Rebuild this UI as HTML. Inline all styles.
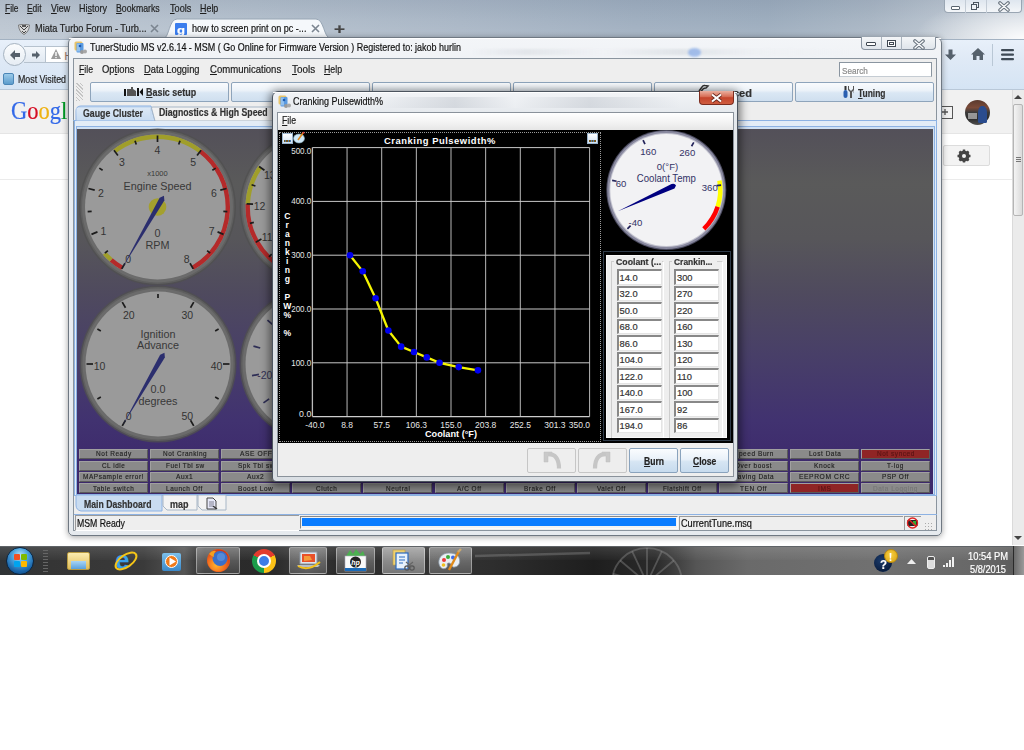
<!DOCTYPE html>
<html><head><meta charset="utf-8"><style>
*{margin:0;padding:0;box-sizing:border-box}
html,body{width:1024px;height:750px;overflow:hidden;background:#fff;font-family:"Liberation Sans",sans-serif}
body{position:relative}
.a{position:absolute}
.t{position:absolute;white-space:nowrap;line-height:1;-webkit-text-stroke:0.2px currentColor}
u{text-decoration:underline;text-underline-offset:1px;text-decoration-thickness:1px}
</style></head><body>
<div class="a" style="left:0px;top:0px;width:1024px;height:40px;background:linear-gradient(90deg,#bcc6d1 0%,#b3bfcc 25%,#aab7c6 45%,#a0afc0 62%,#9dadbe 75%,#a9b6c4 85%,#bcc6d1 93%,#c8d1db 100%)"></div>
<div class="a" style="left:0px;top:0px;width:1024px;height:40px;background:linear-gradient(180deg,rgba(60,80,110,0.10) 0%,rgba(255,255,255,0.0) 50%,rgba(255,255,255,0.10) 100%)"></div>
<div class="a" style="left:850px;top:0px;width:174px;height:40px;background:radial-gradient(ellipse 110px 45px at 100% 100%,rgba(255,255,255,.95) 0%,rgba(255,255,255,.5) 45%,rgba(255,255,255,0) 100%)"></div>
<div class="t" style="left:4.50px;top:2.89px;font-size:11px;color:#1e1e1e;transform:scaleX(0.7616);transform-origin:0 0;"><u>F</u>ile</div>
<div class="t" style="left:27.00px;top:2.89px;font-size:11px;color:#1e1e1e;transform:scaleX(0.7650);transform-origin:0 0;"><u>E</u>dit</div>
<div class="t" style="left:50.50px;top:2.89px;font-size:11px;color:#1e1e1e;transform:scaleX(0.8078);transform-origin:0 0;"><u>V</u>iew</div>
<div class="t" style="left:78.60px;top:2.89px;font-size:11px;color:#1e1e1e;transform:scaleX(0.8210);transform-origin:0 0;">Hi<u>s</u>tory</div>
<div class="t" style="left:116.40px;top:2.89px;font-size:11px;color:#1e1e1e;transform:scaleX(0.7925);transform-origin:0 0;"><u>B</u>ookmarks</div>
<div class="t" style="left:169.60px;top:2.89px;font-size:11px;color:#1e1e1e;transform:scaleX(0.8333);transform-origin:0 0;"><u>T</u>ools</div>
<div class="t" style="left:200.00px;top:2.89px;font-size:11px;color:#1e1e1e;transform:scaleX(0.8089);transform-origin:0 0;"><u>H</u>elp</div>
<div class="a" style="left:944px;top:-1px;width:78px;height:14px;background:linear-gradient(180deg,#dde5ee,#f3f6f9);border:1px solid #9aa6b3;border-top:none;border-radius:0 0 4px 4px"></div>
<div class="a" style="left:965px;top:0px;width:1px;height:13px;background:#c3ccd6"></div>
<div class="a" style="left:986px;top:0px;width:1px;height:13px;background:#c3ccd6"></div>
<div class="a" style="left:951px;top:6px;width:9px;height:4px;border:1.2px solid #5a6570;background:#fff;border-radius:1px"></div>
<div class="a" style="left:973px;top:2px;width:6px;height:6px;border:1px solid #4a5560"></div>
<div class="a" style="left:971px;top:4px;width:6px;height:6px;border:1px solid #4a5560;background:#eef2f6"></div>
<svg class="a" style="left:998px;top:1px" width="12" height="11"><path d="M2 2 L10 9 M10 2 L2 9" stroke="#6a7580" stroke-width="3.6" stroke-linecap="round"/><path d="M2 2 L10 9 M10 2 L2 9" stroke="#fbfcfd" stroke-width="1.4" stroke-linecap="round"/></svg>
<svg class="a" style="left:18px;top:24px" width="12" height="11"><path d="M0.5 1 Q6 -0.5 11.5 1 Q11 8 6 10.5 Q1 8 0.5 1Z" fill="#d8d8d8" stroke="#666" stroke-width=".8"/><path d="M2 2 L6 6 L10 2 M4 7 L6 9 L8 7" stroke="#444" stroke-width="1" fill="none"/><rect x="4" y="1" width="4" height="2" fill="#555"/></svg>
<div class="t" style="left:34.50px;top:23.29px;font-size:11px;color:#222;transform:scaleX(0.8328);transform-origin:0 0;">Miata Turbo Forum - Turb...</div>
<svg class="a" style="left:150px;top:24px" width="9" height="9"><path d="M1 1 L8 8 M8 1 L1 8" stroke="#7b8590" stroke-width="1.6"/></svg>
<svg class="a" style="left:164px;top:18px" width="166" height="20"><path d="M0 20 C5 20 5 1 13 1 L152 1 C160 1 160 20 166 20 Z" fill="#f5f8fb" stroke="#98a6b5" stroke-width="1"/></svg>
<div class="a" style="left:175px;top:23px;width:12px;height:12px;background:#3b7ded;border-radius:1px"></div>
<div class="t" style="left:177.00px;top:24.69px;font-size:11px;font-weight:bold;color:#fff;transform:scaleX(1.1906);transform-origin:0 0;">g</div>
<div class="t" style="left:191.60px;top:23.29px;font-size:11px;color:#111;transform:scaleX(0.8243);transform-origin:0 0;">how to screen print on pc -...</div>
<svg class="a" style="left:311px;top:24px" width="9" height="9"><path d="M1 1 L8 8 M8 1 L1 8" stroke="#7b8590" stroke-width="1.6"/></svg>
<div class="t" style="left:334.00px;top:21.30px;font-size:15px;font-weight:bold;color:#444;transform:scaleX(1.2557);transform-origin:0 0;">+</div>
<div class="a" style="left:0px;top:39px;width:1024px;height:51px;background:linear-gradient(180deg,#e8f0fa 0%,#e0eaf6 35%,#d5e4f4 100%);border-top:1px solid #a3b2c2;border-bottom:1px solid #b9c8d8"></div>
<div class="a" style="left:24px;top:46px;width:22px;height:17px;background:linear-gradient(180deg,#f3f7fb,#e1e9f2);border:1px solid #b6c2ce;border-left:none"></div>
<div class="a" style="left:45px;top:46px;width:30px;height:17px;background:#fff;border:1px solid #b6c2ce"></div>
<div class="a" style="left:3px;top:43px;width:23px;height:23px;border-radius:50%;background:linear-gradient(180deg,#fbfcfd,#e6edf4);border:1px solid #a6b3c0"></div>
<svg class="a" style="left:9px;top:49px" width="12" height="12"><path d="M1 6 L6 1 L6 4 L11 4 L11 8 L6 8 L6 11 Z" fill="#56616c"/></svg>
<svg class="a" style="left:31px;top:50px" width="10" height="10"><path d="M9 5 L5 1 L5 3.5 L1 3.5 L1 6.5 L5 6.5 L5 9 Z" fill="#56616c"/></svg>
<svg class="a" style="left:50px;top:48px" width="12" height="12"><path d="M6 1 L11 11 L1 11 Z" fill="#9a9a9a"/><rect x="5.3" y="4" width="1.4" height="4" fill="#fff"/><rect x="5.3" y="9" width="1.4" height="1.2" fill="#fff"/></svg>
<div class="t" style="left:64.50px;top:51.53px;font-size:10px;color:#9a7a6a;transform:scaleX(1.0000);transform-origin:0 0;">H</div>
<div class="a" style="left:3px;top:73px;width:11px;height:12px;background:linear-gradient(180deg,#9ccbea,#5c9ccc);border-radius:2px;border:1px solid #4b86b6"></div>
<div class="t" style="left:18.00px;top:74.09px;font-size:11px;color:#222;transform:scaleX(0.8039);transform-origin:0 0;">Most Visited</div>
<svg class="a" style="left:945px;top:49px" width="12" height="12"><path d="M3.5 0.5 L7.5 0.5 L7.5 5.5 L11 5.5 L5.5 11 L0 5.5 L3.5 5.5 Z" fill="#56616c"/></svg>
<svg class="a" style="left:970px;top:47px" width="16" height="14"><path d="M8 1 L15 7.5 L13 7.5 L13 13 L9.5 13 L9.5 9 L6.5 9 L6.5 13 L3 13 L3 7.5 L1 7.5 Z" fill="#56616c"/></svg>
<div class="a" style="left:992px;top:44px;width:1px;height:22px;background:#b9c7d5"></div>
<svg class="a" style="left:1001px;top:49px" width="14" height="12"><rect x="0" y="0" width="13" height="2.2" rx="1" fill="#3e4a56"/><rect x="0" y="4.5" width="13" height="2.2" rx="1" fill="#3e4a56"/><rect x="0" y="9" width="13" height="2.2" rx="1" fill="#3e4a56"/></svg>
<div class="a" style="left:0px;top:90px;width:1012px;height:455px;background:#fff"></div>
<div class="a" style="left:0px;top:90px;width:1012px;height:44px;background:#f1f1f1;border-bottom:1px solid #e5e5e5"></div>
<div class="a" style="left:0px;top:179px;width:1012px;height:1px;background:#ebebeb"></div>
<div class="t" style="left:11px;top:97.6px;font-family:'Liberation Serif',serif;font-size:25px;transform:scaleX(0.9);transform-origin:0 0"><span style="color:#3369e8">G</span><span style="color:#d50f25">o</span><span style="color:#eeb211">o</span><span style="color:#3369e8">g</span><span style="color:#009925">l</span></div>
<div class="a" style="left:965px;top:100px;width:25px;height:25px;border-radius:50%;overflow:hidden;background:linear-gradient(180deg,#5a3a2e 0%,#7a4a38 30%,#3a3a3a 50%,#2c2c2c 75%,#505050 100%)"></div>
<div class="a" style="left:978px;top:106px;width:9px;height:17px;border-radius:40% 40% 10% 10%;background:#2a4c8e"></div>
<div class="a" style="left:968px;top:113px;width:9px;height:6px;background:#d8d8d8;opacity:.6"></div>
<div class="a" style="left:943px;top:145px;width:47px;height:21px;background:#f3f3f3;border:1px solid #dcdcdc;border-radius:2px"></div>
<svg class="a" style="left:957px;top:149px" width="14" height="14"><circle cx="7" cy="7" r="4.2" fill="none" stroke="#444" stroke-width="2.6"/><g stroke="#444" stroke-width="2.4"><line x1="7" y1="0.5" x2="7" y2="13.5"/><line x1="0.5" y1="7" x2="13.5" y2="7"/><line x1="2.4" y1="2.4" x2="11.6" y2="11.6"/><line x1="11.6" y1="2.4" x2="2.4" y2="11.6"/></g><circle cx="7" cy="7" r="2" fill="#f3f3f3"/></svg>
<div class="a" style="left:942px;top:106px;width:11px;height:13px;border:1px solid #555;border-left:none;background:transparent"></div>
<svg class="a" style="left:942px;top:108px" width="8" height="8"><path d="M0 4h6M3 1v6" stroke="#555" stroke-width="1.3"/></svg>
<div class="a" style="left:1012px;top:90px;width:12px;height:455px;background:#ebebeb;border-left:1px solid #dadada"></div>
<div class="a" style="left:1013px;top:104px;width:10px;height:112px;background:linear-gradient(90deg,#f4f4f4,#dadada);border:1px solid #b5b5b5;border-radius:2px"></div>
<div class="a" style="left:1016px;top:157px;width:5px;height:1px;background:#777;box-shadow:0 2px 0 #777,0 4px 0 #777"></div>
<svg class="a" style="left:1014px;top:94px" width="8" height="6"><path d="M0 5 L4 1 L8 5 Z" fill="#444"/></svg>
<svg class="a" style="left:1014px;top:535px" width="8" height="6"><path d="M0 1 L4 5 L8 1 Z" fill="#444"/></svg>
<div class="a" style="left:0px;top:546px;width:1024px;height:29px;background:linear-gradient(90deg,#2f3336 0%,#353535 5%,#3a3a3a 14%,#555 18%,#2a2a2a 20%,#2b2b2b 27%,#3e3e3e 30%,#2a2a2a 33%,#333 42%,#2e2e2e 48%,#1e1e1e 58%,#2a2a2a 64%,#555 68%,#6a6a6a 73%,#707070 85%,#686868 95%,#5a5a5a 100%);border-top:1px solid #5f6367"></div>
<div class="a" style="left:0px;top:547px;width:1024px;height:13px;background:linear-gradient(180deg,rgba(255,255,255,.12),rgba(255,255,255,0.02))"></div>
<svg class="a" style="left:470px;top:546px" width="230" height="29"><path d="M5 10 L120 7" stroke="rgba(170,170,170,.3)" stroke-width="2.5"/><g stroke="rgba(160,160,160,.35)" stroke-width="1.8" fill="none"><circle cx="177" cy="37" r="35"/><path d="M183.1 31.9 L203.8 14.5 M180.4 29.7 L191.8 5.3 M177.0 29.0 L177.0 2.0 M173.6 29.7 L162.2 5.3 M170.9 31.9 L150.2 14.5 M169.3 34.9 L143.2 27.9"/></g></svg>
<div class="a" style="left:6px;top:547px;width:28px;height:28px;border-radius:50%;background:radial-gradient(circle at 50% 30%,#bfe6fb 0%,#4aa3dd 35%,#1a64a8 70%,#0e3a68 100%);border:1px solid #0a2440"></div>
<div class="a" style="left:14px;top:554px;width:6px;height:6px;background:#f25022;border-radius:1px"></div>
<div class="a" style="left:21px;top:554px;width:6px;height:6px;background:#7fba00;border-radius:1px"></div>
<div class="a" style="left:14px;top:561px;width:6px;height:6px;background:#00a4ef;border-radius:1px"></div>
<div class="a" style="left:21px;top:561px;width:6px;height:6px;background:#ffb900;border-radius:1px"></div>
<div class="a" style="left:43px;top:550px;width:5px;height:22px;background:repeating-linear-gradient(180deg,#666 0 1px,transparent 1px 3px)"></div>
<div class="a" style="left:196px;top:547px;width:44px;height:27px;border:1px solid rgba(255,255,255,.38);border-radius:2px;background:linear-gradient(180deg,rgba(255,255,255,0.32),rgba(255,255,255,0.12))"></div>
<div class="a" style="left:289px;top:547px;width:38px;height:27px;border:1px solid rgba(255,255,255,.38);border-radius:2px;background:linear-gradient(180deg,rgba(255,255,255,0.35),rgba(255,255,255,0.15))"></div>
<div class="a" style="left:336px;top:547px;width:39px;height:27px;border:1px solid rgba(255,255,255,.38);border-radius:2px;background:linear-gradient(180deg,rgba(255,255,255,0.35),rgba(255,255,255,0.15))"></div>
<div class="a" style="left:382px;top:547px;width:43px;height:27px;border:1px solid rgba(255,255,255,.38);border-radius:2px;background:linear-gradient(180deg,rgba(255,255,255,0.55),rgba(255,255,255,0.35))"></div>
<div class="a" style="left:429px;top:547px;width:43px;height:27px;border:1px solid rgba(255,255,255,.38);border-radius:2px;background:linear-gradient(180deg,rgba(255,255,255,0.38),rgba(255,255,255,0.18000000000000002))"></div>
<div class="a" style="left:67px;top:552px;width:23px;height:18px;background:linear-gradient(180deg,#fbecb0,#e0bd5a);border-radius:2px;border:1px solid #b89a40"></div>
<div class="a" style="left:71px;top:561px;width:15px;height:8px;background:linear-gradient(180deg,#a8d4f5,#5aa0dc)"></div>
<svg class="a" style="left:113px;top:548px" width="26" height="26"><text x="2" y="21" font-family="Liberation Sans" font-size="26" font-weight="bold" fill="#3aa0ea">e</text><ellipse cx="13" cy="13" rx="12" ry="6" fill="none" stroke="#f5c518" stroke-width="2" transform="rotate(-35 13 13)"/></svg>
<div class="a" style="left:162px;top:553px;width:19px;height:18px;background:linear-gradient(180deg,#7cc0ec,#3a88c8);border-radius:2px"></div>
<div class="a" style="left:165px;top:555px;width:13px;height:13px;border-radius:50%;background:#f07a1a;border:1px solid #fff"></div>
<svg class="a" style="left:168px;top:557px" width="9" height="9"><path d="M1.5 0.5 L8 4.5 L1.5 8.5 Z" fill="#fff"/></svg>
<svg class="a" style="left:206px;top:548px" width="25" height="25"><circle cx="12.5" cy="12.5" r="11.5" fill="#e8591c"/><circle cx="12.5" cy="12.5" r="11" fill="url(#fxg)"/><defs><radialGradient id="fxg" cx="0.4" cy="0.7" r="0.7"><stop offset="0" stop-color="#ffb52e"/><stop offset="0.6" stop-color="#f06a1e"/><stop offset="1" stop-color="#c9381a"/></radialGradient></defs><circle cx="14" cy="10.5" r="7.5" fill="#3a6fc9"/><circle cx="15" cy="9" r="4" fill="#5f95e0" opacity=".7"/><path d="M3 6 Q6 2 10 3 Q7 6 8 9 Q5 8 3 6Z" fill="#f5a020"/></svg>
<div class="a" style="left:252px;top:549px;width:24px;height:24px;border-radius:50%;background:conic-gradient(from -60deg,#e33b2e 0deg 120deg,#fbc116 120deg 240deg,#1a9c4a 240deg 360deg)"></div>
<div class="a" style="left:257px;top:554px;width:14px;height:14px;border-radius:50%;background:#3c7ce8;border:2.5px solid #fff"></div>
<svg class="a" style="left:295px;top:550px" width="28" height="22"><path d="M5 2 L22 2 L22 14 L5 14 Z" fill="#dfe3ea" stroke="#8a94a0" stroke-width="1"/><path d="M7 4 L20 4 L20 12 L7 12 Z" fill="#e8502a"/><path d="M9 6 L15 6 L17 10 L9 11 Z" fill="#f59a3a"/><path d="M2 15 L25 15 L23 17 L4 17 Z" fill="#b8bec8"/><path d="M3 16 Q13 22 25 12" fill="none" stroke="#f2c01a" stroke-width="2"/></svg>
<svg class="a" style="left:343px;top:548px" width="25" height="25"><path d="M3 8 L7 2 L10 6 L13 1 L17 6 L20 3 L22 8 Z" fill="#4cb050"/><rect x="2" y="8" width="21" height="15" fill="#fafafa" stroke="#aab" stroke-width=".6"/><rect x="2" y="20" width="21" height="3" fill="#1a6ab8"/><circle cx="12.5" cy="14" r="5.5" fill="#222"/><text x="12.5" y="16.5" font-family="Liberation Sans" font-size="7" font-weight="bold" font-style="italic" fill="#fff" text-anchor="middle">hp</text></svg>
<svg class="a" style="left:391px;top:549px" width="25" height="24"><rect x="2" y="1" width="12" height="15" fill="#f0d070" stroke="#b89a40" stroke-width=".6"/><rect x="5" y="4" width="12" height="16" fill="#e8f2fc" stroke="#2a6ac0" stroke-width="1.2"/><path d="M8 8h6M8 11h6M8 14h4" stroke="#2a6ac0" stroke-width="1"/><circle cx="16" cy="19" r="2.2" fill="none" stroke="#555" stroke-width="1.2"/><circle cx="21" cy="19" r="2.2" fill="none" stroke="#555" stroke-width="1.2"/><path d="M15 13 L21 18 M22 13 L16 18" stroke="#666" stroke-width="1.2"/></svg>
<svg class="a" style="left:437px;top:548px" width="26" height="25"><path d="M12 5 C4 5 1 11 2 16 C3 21 8 22 10 19 C11 17 9 15 12 15 C15 15 14 20 18 19 C23 18 24 12 21 8 C19 6 16 5 12 5Z" fill="#e9eef3" stroke="#8a99a8" stroke-width=".8"/><circle cx="7" cy="12" r="2" fill="#e83a3a"/><circle cx="11" cy="9" r="2" fill="#3aaa3a"/><circle cx="16" cy="9.5" r="2" fill="#3a6ae8"/><circle cx="6.5" cy="17" r="1.8" fill="#f0c020"/><path d="M12 22 L22 3" stroke="#e08a1a" stroke-width="2.4"/><path d="M21 4 L24 1" stroke="#c9a870" stroke-width="2.4"/></svg>
<div class="a" style="left:874px;top:554px;width:18px;height:18px;border-radius:50%;background:radial-gradient(circle at 40% 35%,#1a3a6a,#0a1e40 70%,#2a70c0 100%)"></div>
<div class="t" style="left:880.00px;top:558.00px;font-size:13px;font-weight:bold;color:#fff;transform:scaleX(0.8815);transform-origin:0 0;">?</div>
<div class="a" style="left:884px;top:549px;width:14px;height:14px;border-radius:50%;background:radial-gradient(circle at 45% 40%,#f8d040,#d8a010);border:1px solid #b88a10"></div>
<div class="t" style="left:889.00px;top:552.53px;font-size:10px;font-weight:bold;color:#fff;transform:scaleX(0.9008);transform-origin:0 0;">!</div>
<svg class="a" style="left:907px;top:559px" width="9" height="6"><path d="M0 5 L4.5 0 L9 5 Z" fill="#eee"/></svg>
<div class="a" style="left:927px;top:556px;width:8px;height:13px;border:1.5px solid #eee;border-radius:2px;background:linear-gradient(180deg,#555 25%,#ddd 25%)"></div>
<svg class="a" style="left:942px;top:555px" width="14" height="13"><path d="M1 12h2v-2H1zM4 12h2V8H4zM7 12h2V5H7zM10 12h2V2h-2z" fill="#f0f0f0"/></svg>
<div class="t" style="left:968.00px;top:552.03px;font-size:10px;color:#fff;transform:scaleX(0.9345);transform-origin:0 0;">10:54 PM</div>
<div class="t" style="left:970.00px;top:565.03px;font-size:10px;color:#fff;transform:scaleX(0.9248);transform-origin:0 0;">5/8/2015</div>
<div class="a" style="left:1013px;top:546px;width:11px;height:29px;background:linear-gradient(90deg,#6a6a6a,#9a9a9a);border-left:1px solid #2a2a2a"></div>
<div class="a" style="left:68px;top:37px;width:874px;height:499px;border-radius:6px 6px 5px 5px;box-shadow:0 1px 6px rgba(0,0,0,.38)"></div>
<div class="a" style="left:68px;top:37px;width:874px;height:499px;border-radius:6px 6px 5px 5px;background:linear-gradient(180deg,#f3f5f8 0%,#eceff3 10%,#e6eaee 100%);border:1px solid #6f7882"></div>
<div class="a" style="left:69px;top:38px;width:872px;height:1px;background:rgba(255,255,255,.9)"></div>
<div class="a" style="left:470px;top:49px;width:380px;height:6px;background:linear-gradient(90deg,rgba(255,255,255,0),rgba(195,200,208,.3) 15%,rgba(240,242,245,.2) 35%,rgba(185,192,200,.3) 55%,rgba(230,233,236,.2) 75%,rgba(255,255,255,0));filter:blur(1px)"></div>
<div class="a" style="left:688px;top:48px;width:13px;height:9px;border-radius:50%;background:rgba(80,135,230,.45);filter:blur(1px)"></div>
<svg class="a" style="left:74px;top:41px" width="14" height="14"><rect x="0.5" y="0.5" width="8" height="9" rx="1.5" fill="#e8c46a"/><rect x="2.5" y="2" width="7" height="9.5" rx="1" fill="#5a9ae0"/><rect x="3" y="2.5" width="3" height="8" fill="#a8d0f5" opacity=".7"/><circle cx="6" cy="5" r="1.3" fill="#1a5ab0"/><circle cx="8" cy="11" r="2" fill="#9a9a9a"/><circle cx="11" cy="10.5" r="2" fill="#a8a8a8"/></svg>
<div class="t" style="left:89.50px;top:41.76px;font-size:10.8px;color:#111;transform:scaleX(0.8306);transform-origin:0 0;">TunerStudio MS v2.6.14 - MSM ( Go Online for Firmware Version ) Registered to: jakob hurlin</div>
<div class="a" style="left:861px;top:37px;width:75px;height:13px;background:linear-gradient(180deg,#f4f6f8,#dfe5eb);border:1px solid #8893a0;border-top:none;border-radius:0 0 4px 4px"></div>
<div class="a" style="left:881px;top:37px;width:1px;height:13px;background:#a9b3bd"></div>
<div class="a" style="left:901px;top:37px;width:1px;height:13px;background:#a9b3bd"></div>
<div class="a" style="left:866px;top:42px;width:10px;height:4px;border:1px solid #3f4852;background:#fff;border-radius:1px"></div>
<div class="a" style="left:887px;top:40px;width:9px;height:7px;border:1px solid #3f4852;background:#fff"></div>
<div class="a" style="left:889px;top:42px;width:5px;height:3px;border:1px solid #3f4852"></div>
<svg class="a" style="left:913px;top:38.5px" width="12" height="11"><path d="M2 2 L10 9 M10 2 L2 9" stroke="#6a7580" stroke-width="3.6" stroke-linecap="round"/><path d="M2 2 L10 9 M10 2 L2 9" stroke="#fbfcfd" stroke-width="1.4" stroke-linecap="round"/></svg>
<div class="a" style="left:73px;top:58px;width:864px;height:473px;background:#eeeeee;border:1px solid #8a949e"></div>
<div class="t" style="left:78.60px;top:64.09px;font-size:11px;color:#1a1a1a;transform:scaleX(0.7898);transform-origin:0 0;"><u>F</u>ile</div>
<div class="t" style="left:102.00px;top:64.09px;font-size:11px;color:#1a1a1a;transform:scaleX(0.8573);transform-origin:0 0;">Op<u>t</u>ions</div>
<div class="t" style="left:144.20px;top:64.09px;font-size:11px;color:#1a1a1a;transform:scaleX(0.8481);transform-origin:0 0;"><u>D</u>ata Logging</div>
<div class="t" style="left:209.80px;top:64.09px;font-size:11px;color:#1a1a1a;transform:scaleX(0.8691);transform-origin:0 0;"><u>C</u>ommunications</div>
<div class="t" style="left:291.90px;top:64.09px;font-size:11px;color:#1a1a1a;transform:scaleX(0.8995);transform-origin:0 0;"><u>T</u>ools</div>
<div class="t" style="left:324.00px;top:64.09px;font-size:11px;color:#1a1a1a;transform:scaleX(0.7956);transform-origin:0 0;"><u>H</u>elp</div>
<div class="a" style="left:839px;top:62px;width:93px;height:15px;background:#fff;border:1px solid #8a95a0;border-bottom-color:#c5ccd3"></div>
<div class="t" style="left:841.50px;top:65.66px;font-size:9.5px;color:#8a8a8a;transform:scaleX(0.8538);transform-origin:0 0;">Search</div>
<div class="a" style="left:76px;top:83px;width:7px;height:18px;background:repeating-linear-gradient(45deg,#c4c4c4 0 1px,#eeeeee 1px 2.5px)"></div>
<div class="a" style="left:90px;top:82px;width:139px;height:20px;background:linear-gradient(180deg,#f9fbfd 0%,#edf3f9 40%,#dae7f4 55%,#cfdfef 100%);border:1px solid #8ea4bb;border-radius:2px"></div>
<div class="a" style="left:231px;top:82px;width:139px;height:20px;background:linear-gradient(180deg,#f9fbfd 0%,#edf3f9 40%,#dae7f4 55%,#cfdfef 100%);border:1px solid #8ea4bb;border-radius:2px"></div>
<div class="a" style="left:372px;top:82px;width:139px;height:20px;background:linear-gradient(180deg,#f9fbfd 0%,#edf3f9 40%,#dae7f4 55%,#cfdfef 100%);border:1px solid #8ea4bb;border-radius:2px"></div>
<div class="a" style="left:513px;top:82px;width:139px;height:20px;background:linear-gradient(180deg,#f9fbfd 0%,#edf3f9 40%,#dae7f4 55%,#cfdfef 100%);border:1px solid #8ea4bb;border-radius:2px"></div>
<div class="a" style="left:654px;top:82px;width:139px;height:20px;background:linear-gradient(180deg,#f9fbfd 0%,#edf3f9 40%,#dae7f4 55%,#cfdfef 100%);border:1px solid #8ea4bb;border-radius:2px"></div>
<div class="a" style="left:795px;top:82px;width:139px;height:20px;background:linear-gradient(180deg,#f9fbfd 0%,#edf3f9 40%,#dae7f4 55%,#cfdfef 100%);border:1px solid #8ea4bb;border-radius:2px"></div>
<svg class="a" style="left:124px;top:86px" width="20" height="11"><rect x="0" y="3" width="2" height="7" fill="#111"/><path d="M3 10 L3 3 L7 3 L7 1 L9 1 L9 3 L12 5 L12 10 Z" fill="#555"/><rect x="13" y="2" width="2" height="8" fill="#111"/><path d="M19 2 L15.5 6 L19 10 Z" fill="#111"/></svg>
<div class="t" style="left:146.20px;top:88.17px;font-size:10.2px;font-weight:bold;color:#333;transform:scaleX(0.8767);transform-origin:0 0;"><u>B</u>asic setup</div>
<div class="t" style="left:853.00px;top:86.38px;font-size:9px;color:#555;transform:scaleX(0.1052);transform-origin:0 0;">&#x2699;</div>
<svg class="a" style="left:843px;top:86px" width="12" height="12"><rect x="0.5" y="4" width="4" height="8" rx="2" fill="#2a5fb0"/><rect x="1.5" y="0" width="2" height="4" fill="#333"/><path d="M6 0 L6 3 L8 5 L10 3 L10 0 L11 0 L11 4 L9 6 L9 12 L7 12 L7 6 L5 4 L5 0 Z" fill="#555"/></svg>
<div class="t" style="left:857.80px;top:88.97px;font-size:10.2px;font-weight:bold;color:#333;transform:scaleX(0.8276);transform-origin:0 0;"><u>T</u>uning</div>
<div class="t" style="left:733.00px;top:88.97px;font-size:10.2px;font-weight:bold;color:#333;transform:scaleX(1.0810);transform-origin:0 0;">ced</div>
<svg class="a" style="left:698px;top:84px" width="12" height="8"><path d="M1 7 L4 3 Q5 1 7 1.5 L10 2 L8 4 Q6 4 5 5 L3 7.5" fill="none" stroke="#333" stroke-width="1.5"/></svg>
<div class="a" style="left:73px;top:120px;width:864px;height:1px;background:#8db2e3"></div>
<svg class="a" style="left:75px;top:105px" width="200" height="17"><path d="M1 16 L1 6 Q1 1 6 1 L76 1 L80 16 Z" fill="#c9dcf1" stroke="#8db2e3"/><path d="M80 16 L76.5 3 Q76 2 78 2 L199 2 L199 16 Z" fill="#f2f2f2" stroke="#a7b6c6"/></svg>
<div class="a" style="left:76px;top:108px;width:74px;height:12px;background:linear-gradient(180deg,rgba(255,255,255,.35),rgba(255,255,255,0))"></div>
<div class="t" style="left:82.90px;top:108.60px;font-size:10.4px;font-weight:bold;color:#333;transform:scaleX(0.8441);transform-origin:0 0;">Gauge Cluster</div>
<div class="t" style="left:159.00px;top:108.40px;font-size:10.4px;font-weight:bold;color:#333;transform:scaleX(0.8405);transform-origin:0 0;">Diagnostics &amp; High Speed</div>
<div class="a" style="left:74px;top:121px;width:863px;height:375px;background:#e3ecf6;border:1px solid #8db2e3;border-top:none"></div>
<div class="a" style="left:76px;top:126px;width:859px;height:369px;border:1px solid #8db2e3;background:#cfe0f3"></div>
<div class="a" style="left:77px;top:129px;width:856px;height:365px;background:linear-gradient(180deg,#535059 0%,#5a5a5a 15%,#57565a 30%,#4f4a5e 45%,#483f68 62%,#413270 80%,#3d2a6c 92%,#3c286a 100%)"></div>
<svg class="a" style="left:77px;top:128px" width="856" height="366" viewBox="77 128 856 366" font-family="Liberation Sans, sans-serif">
<circle cx="157.5" cy="207" r="78.5" fill="#505050" opacity="0.8"/>
<circle cx="157.5" cy="207" r="77" fill="#5f5f5f"/>
<circle cx="157.5" cy="207" r="75.5" fill="#6b6b6b"/>
<circle cx="157.5" cy="207" r="72.5" fill="#9a9a9a"/>
<path d="M122.35 267.88 A70.3 70.3 0 0 1 111.15 259.85" stroke="#b42a2a" stroke-width="4.4" fill="none"/>
<path d="M111.15 259.85 A70.3 70.3 0 0 1 104.65 253.35" stroke="#a09e2a" stroke-width="4.4" fill="none"/>
<path d="M114.70 151.23 A70.3 70.3 0 0 1 200.30 151.23" stroke="#a09e2a" stroke-width="4.4" fill="none"/>
<path d="M200.30 151.23 A70.3 70.3 0 0 1 192.65 267.88" stroke="#b42a2a" stroke-width="4.4" fill="none"/>
<line x1="125.00" y1="263.29" x2="121.75" y2="268.92" stroke="#1c1c1c" stroke-width="1.7"/>
<line x1="107.88" y1="250.52" x2="104.87" y2="253.15" stroke="#1c1c1c" stroke-width="1.7"/>
<line x1="97.45" y1="231.87" x2="91.44" y2="234.36" stroke="#1c1c1c" stroke-width="1.7"/>
<line x1="91.64" y1="211.32" x2="87.65" y2="211.58" stroke="#1c1c1c" stroke-width="1.7"/>
<line x1="94.71" y1="190.18" x2="88.44" y2="188.49" stroke="#1c1c1c" stroke-width="1.7"/>
<line x1="102.62" y1="170.33" x2="99.30" y2="168.11" stroke="#1c1c1c" stroke-width="1.7"/>
<line x1="117.93" y1="155.43" x2="113.97" y2="150.28" stroke="#1c1c1c" stroke-width="1.7"/>
<line x1="136.28" y1="144.50" x2="135.00" y2="140.71" stroke="#1c1c1c" stroke-width="1.7"/>
<line x1="157.50" y1="142.00" x2="157.50" y2="135.50" stroke="#1c1c1c" stroke-width="1.7"/>
<line x1="178.72" y1="144.50" x2="180.00" y2="140.71" stroke="#1c1c1c" stroke-width="1.7"/>
<line x1="197.07" y1="155.43" x2="201.03" y2="150.28" stroke="#1c1c1c" stroke-width="1.7"/>
<line x1="212.38" y1="170.33" x2="215.70" y2="168.11" stroke="#1c1c1c" stroke-width="1.7"/>
<line x1="220.29" y1="190.18" x2="226.56" y2="188.49" stroke="#1c1c1c" stroke-width="1.7"/>
<line x1="223.36" y1="211.32" x2="227.35" y2="211.58" stroke="#1c1c1c" stroke-width="1.7"/>
<line x1="217.55" y1="231.87" x2="223.56" y2="234.36" stroke="#1c1c1c" stroke-width="1.7"/>
<line x1="207.12" y1="250.52" x2="210.13" y2="253.15" stroke="#1c1c1c" stroke-width="1.7"/>
<line x1="190.00" y1="263.29" x2="193.25" y2="268.92" stroke="#1c1c1c" stroke-width="1.7"/>
<text x="128.25" y="263.16" font-size="10.5" fill="#333" text-anchor="middle">0</text>
<text x="103.45" y="234.89" font-size="10.5" fill="#333" text-anchor="middle">1</text>
<text x="100.99" y="197.36" font-size="10.5" fill="#333" text-anchor="middle">2</text>
<text x="121.89" y="166.09" font-size="10.5" fill="#333" text-anchor="middle">3</text>
<text x="157.50" y="154.00" font-size="10.5" fill="#333" text-anchor="middle">4</text>
<text x="193.11" y="166.09" font-size="10.5" fill="#333" text-anchor="middle">5</text>
<text x="214.01" y="197.36" font-size="10.5" fill="#333" text-anchor="middle">6</text>
<text x="211.55" y="234.89" font-size="10.5" fill="#333" text-anchor="middle">7</text>
<text x="186.75" y="263.16" font-size="10.5" fill="#333" text-anchor="middle">8</text>
<text x="157.5" y="175.5" font-size="7.5" fill="#383838" text-anchor="middle">x1000</text>
<text x="157.5" y="189.5" font-size="10.8" fill="#383838" text-anchor="middle">Engine Speed</text>
<text x="157.5" y="237" font-size="10.8" fill="#383838" text-anchor="middle">0</text>
<text x="157.5" y="249" font-size="10.8" fill="#383838" text-anchor="middle">RPM</text>
<circle cx="157.5" cy="207" r="8.8" fill="#a4a02e"/>
<path d="M122.00 268.49 L164.34 200.56 L164.00 195.74 L159.66 197.86 Z" fill="#2b2e6e"/>
<circle cx="318" cy="207" r="78.5" fill="#505050" opacity="0.8"/>
<circle cx="318" cy="207" r="77" fill="#5f5f5f"/>
<circle cx="318" cy="207" r="75.5" fill="#6b6b6b"/>
<circle cx="318" cy="207" r="72.5" fill="#9a9a9a"/>
<path d="M284.46 268.78 A70.3 70.3 0 0 1 247.77 203.93" stroke="#b42a2a" stroke-width="4.4" fill="none"/>
<path d="M247.77 203.93 A70.3 70.3 0 0 1 260.06 167.18" stroke="#a09e2a" stroke-width="4.4" fill="none"/>
<path d="M363.66 153.54 A70.3 70.3 0 0 1 385.05 185.86" stroke="#a09e2a" stroke-width="4.4" fill="none"/>
<path d="M385.05 185.86 A70.3 70.3 0 0 1 350.46 269.36" stroke="#b42a2a" stroke-width="4.4" fill="none"/>
<line x1="286.98" y1="264.12" x2="283.88" y2="269.84" stroke="#1c1c1c" stroke-width="1.7"/>
<line x1="271.74" y1="254.07" x2="268.94" y2="256.93" stroke="#1c1c1c" stroke-width="1.7"/>
<line x1="261.43" y1="239.01" x2="255.77" y2="242.21" stroke="#1c1c1c" stroke-width="1.7"/>
<line x1="253.82" y1="222.41" x2="249.93" y2="223.34" stroke="#1c1c1c" stroke-width="1.7"/>
<line x1="253.06" y1="204.16" x2="246.57" y2="203.88" stroke="#1c1c1c" stroke-width="1.7"/>
<line x1="255.41" y1="186.06" x2="251.62" y2="184.79" stroke="#1c1c1c" stroke-width="1.7"/>
<line x1="264.43" y1="170.18" x2="259.07" y2="166.50" stroke="#1c1c1c" stroke-width="1.7"/>
<line x1="276.02" y1="156.07" x2="273.47" y2="152.99" stroke="#1c1c1c" stroke-width="1.7"/>
<line x1="292.08" y1="147.39" x2="289.49" y2="141.43" stroke="#1c1c1c" stroke-width="1.7"/>
<line x1="309.39" y1="141.56" x2="308.86" y2="137.60" stroke="#1c1c1c" stroke-width="1.7"/>
<line x1="327.61" y1="142.71" x2="328.57" y2="136.29" stroke="#1c1c1c" stroke-width="1.7"/>
<line x1="345.37" y1="146.94" x2="347.03" y2="143.30" stroke="#1c1c1c" stroke-width="1.7"/>
<line x1="360.21" y1="157.57" x2="364.44" y2="152.63" stroke="#1c1c1c" stroke-width="1.7"/>
<line x1="373.04" y1="170.57" x2="376.37" y2="168.36" stroke="#1c1c1c" stroke-width="1.7"/>
<line x1="379.99" y1="187.45" x2="386.19" y2="185.50" stroke="#1c1c1c" stroke-width="1.7"/>
<line x1="383.98" y1="205.27" x2="387.98" y2="205.17" stroke="#1c1c1c" stroke-width="1.7"/>
<line x1="380.93" y1="223.27" x2="387.22" y2="224.90" stroke="#1c1c1c" stroke-width="1.7"/>
<line x1="374.87" y1="240.50" x2="378.31" y2="242.53" stroke="#1c1c1c" stroke-width="1.7"/>
<line x1="362.74" y1="254.15" x2="367.22" y2="258.86" stroke="#1c1c1c" stroke-width="1.7"/>
<line x1="348.48" y1="265.54" x2="350.32" y2="269.09" stroke="#1c1c1c" stroke-width="1.7"/>
<text x="290.09" y="263.91" font-size="10.5" fill="#333" text-anchor="middle">10</text>
<text x="267.08" y="241.31" font-size="10.5" fill="#333" text-anchor="middle">11</text>
<text x="259.56" y="209.95" font-size="10.5" fill="#333" text-anchor="middle">12</text>
<text x="269.79" y="179.37" font-size="10.5" fill="#333" text-anchor="middle">13</text>
<text x="294.67" y="158.85" font-size="10.5" fill="#333" text-anchor="middle">14</text>
<text x="326.65" y="154.64" font-size="10.5" fill="#333" text-anchor="middle">15</text>
<text x="355.99" y="168.02" font-size="10.5" fill="#333" text-anchor="middle">16</text>
<text x="373.79" y="194.91" font-size="10.5" fill="#333" text-anchor="middle">17</text>
<text x="374.64" y="227.15" font-size="10.5" fill="#333" text-anchor="middle">18</text>
<text x="358.27" y="254.93" font-size="10.5" fill="#333" text-anchor="middle">19</text>
<text x="318" y="189.5" font-size="10.8" fill="#383838" text-anchor="middle">AFR</text>
<path d="M316.64 136.01 L315.47 216.05 L318.25 220.00 L320.87 215.95 Z" fill="#2b2e6e"/>
<circle cx="158" cy="364" r="78.5" fill="#505050" opacity="0.8"/>
<circle cx="158" cy="364" r="77" fill="#5f5f5f"/>
<circle cx="158" cy="364" r="75.5" fill="#6b6b6b"/>
<circle cx="158" cy="364" r="72.5" fill="#9a9a9a"/>
<line x1="125.50" y1="420.29" x2="122.25" y2="425.92" stroke="#1c1c1c" stroke-width="1.7"/>
<line x1="100.84" y1="397.00" x2="97.38" y2="399.00" stroke="#1c1c1c" stroke-width="1.7"/>
<line x1="93.00" y1="364.00" x2="86.50" y2="364.00" stroke="#1c1c1c" stroke-width="1.7"/>
<line x1="100.84" y1="331.00" x2="97.38" y2="329.00" stroke="#1c1c1c" stroke-width="1.7"/>
<line x1="125.50" y1="307.71" x2="122.25" y2="302.08" stroke="#1c1c1c" stroke-width="1.7"/>
<line x1="158.00" y1="298.00" x2="158.00" y2="294.00" stroke="#1c1c1c" stroke-width="1.7"/>
<line x1="190.50" y1="307.71" x2="193.75" y2="302.08" stroke="#1c1c1c" stroke-width="1.7"/>
<line x1="215.16" y1="331.00" x2="218.62" y2="329.00" stroke="#1c1c1c" stroke-width="1.7"/>
<line x1="223.00" y1="364.00" x2="229.50" y2="364.00" stroke="#1c1c1c" stroke-width="1.7"/>
<line x1="215.16" y1="397.00" x2="218.62" y2="399.00" stroke="#1c1c1c" stroke-width="1.7"/>
<line x1="190.50" y1="420.29" x2="193.75" y2="425.92" stroke="#1c1c1c" stroke-width="1.7"/>
<text x="128.75" y="420.16" font-size="10.5" fill="#333" text-anchor="middle">0</text>
<text x="99.50" y="369.50" font-size="10.5" fill="#333" text-anchor="middle">10</text>
<text x="128.75" y="318.84" font-size="10.5" fill="#333" text-anchor="middle">20</text>
<text x="187.25" y="318.84" font-size="10.5" fill="#333" text-anchor="middle">30</text>
<text x="216.50" y="369.50" font-size="10.5" fill="#333" text-anchor="middle">40</text>
<text x="187.25" y="420.16" font-size="10.5" fill="#333" text-anchor="middle">50</text>
<text x="158" y="337.5" font-size="10.8" fill="#383838" text-anchor="middle">Ignition</text>
<text x="158" y="349" font-size="10.8" fill="#383838" text-anchor="middle">Advance</text>
<text x="158" y="393" font-size="10.8" fill="#383838" text-anchor="middle">0.0</text>
<text x="158" y="405" font-size="10.8" fill="#383838" text-anchor="middle">degrees</text>
<path d="M122.50 425.49 L164.84 357.56 L164.50 352.74 L160.16 354.86 Z" fill="#2b2e6e"/>
<circle cx="318" cy="364" r="78.5" fill="#505050" opacity="0.8"/>
<circle cx="318" cy="364" r="77" fill="#5f5f5f"/>
<circle cx="318" cy="364" r="75.5" fill="#6b6b6b"/>
<circle cx="318" cy="364" r="72.5" fill="#9a9a9a"/>
<line x1="288.91" y1="416.48" x2="285.52" y2="422.60" stroke="#2e2e55" stroke-width="1.7"/>
<line x1="269.15" y1="398.84" x2="263.45" y2="402.91" stroke="#2e2e55" stroke-width="1.7"/>
<line x1="258.91" y1="374.42" x2="252.02" y2="375.63" stroke="#2e2e55" stroke-width="1.7"/>
<line x1="260.18" y1="347.97" x2="253.44" y2="346.10" stroke="#2e2e55" stroke-width="1.7"/>
<line x1="272.72" y1="324.64" x2="267.43" y2="320.04" stroke="#2e2e55" stroke-width="1.7"/>
<line x1="294.08" y1="308.98" x2="291.28" y2="302.56" stroke="#2e2e55" stroke-width="1.7"/>
<line x1="320.09" y1="304.04" x2="320.34" y2="297.04" stroke="#2e2e55" stroke-width="1.7"/>
<line x1="345.70" y1="310.78" x2="348.94" y2="304.57" stroke="#2e2e55" stroke-width="1.7"/>
<line x1="365.92" y1="327.89" x2="371.51" y2="323.68" stroke="#2e2e55" stroke-width="1.7"/>
<text x="291.82" y="416.73" font-size="10.5" fill="#333355" text-anchor="middle">-40</text>
<text x="264.82" y="378.88" font-size="10.5" fill="#333355" text-anchor="middle">-20</text>
<text x="277.25" y="334.07" font-size="10.5" fill="#333355" text-anchor="middle">0</text>
<text x="319.88" y="315.53" font-size="10.5" fill="#333355" text-anchor="middle">20</text>
<text x="361.13" y="337.00" font-size="10.5" fill="#333355" text-anchor="middle">40</text>
<path d="M283.58 426.10 L324.72 357.44 L324.30 352.63 L320.00 354.82 Z" fill="#2b2e6e"/>
</svg>
<div class="a" style="left:79.0px;top:449px;width:69px;height:10px;background:#8a8a8a;border-top:1px solid #a0a0a0;border-left:1px solid #a0a0a0;border-bottom:1px solid #5a5a5a;border-right:1px solid #5a5a5a"></div>
<div class="t" style="left:95.93px;top:450.47px;font-size:7.0px;letter-spacing:0.6px;color:#222222;transform:scaleX(0.9291);transform-origin:0 0;-webkit-text-stroke:0.15px #222222">Not Ready</div>
<div class="a" style="left:150.1px;top:449px;width:69px;height:10px;background:#8a8a8a;border-top:1px solid #a0a0a0;border-left:1px solid #a0a0a0;border-bottom:1px solid #5a5a5a;border-right:1px solid #5a5a5a"></div>
<div class="t" style="left:162.82px;top:450.47px;font-size:7.0px;letter-spacing:0.6px;color:#222222;transform:scaleX(0.9189);transform-origin:0 0;-webkit-text-stroke:0.15px #222222">Not Cranking</div>
<div class="a" style="left:221.2px;top:449px;width:69px;height:10px;background:#8a8a8a;border-top:1px solid #a0a0a0;border-left:1px solid #a0a0a0;border-bottom:1px solid #5a5a5a;border-right:1px solid #5a5a5a"></div>
<div class="t" style="left:239.81px;top:450.47px;font-size:7.0px;letter-spacing:0.6px;color:#222222;transform:scaleX(0.9479);transform-origin:0 0;-webkit-text-stroke:0.15px #222222">ASE OFF</div>
<div class="a" style="left:292.3px;top:449px;width:69px;height:10px;background:#8a8a8a;border-top:1px solid #a0a0a0;border-left:1px solid #a0a0a0;border-bottom:1px solid #5a5a5a;border-right:1px solid #5a5a5a"></div>
<div class="t" style="left:309.66px;top:450.47px;font-size:7.0px;letter-spacing:0.6px;color:#222222;transform:scaleX(0.9564);transform-origin:0 0;-webkit-text-stroke:0.15px #222222">WUE OFF</div>
<div class="a" style="left:363.4px;top:449px;width:69px;height:10px;background:#8a8a8a;border-top:1px solid #a0a0a0;border-left:1px solid #a0a0a0;border-bottom:1px solid #5a5a5a;border-right:1px solid #5a5a5a"></div>
<div class="t" style="left:377.17px;top:450.47px;font-size:7.0px;letter-spacing:0.6px;color:#222222;transform:scaleX(0.9121);transform-origin:0 0;-webkit-text-stroke:0.15px #222222">Accel Enrich</div>
<div class="a" style="left:434.5px;top:449px;width:69px;height:10px;background:#8a8a8a;border-top:1px solid #a0a0a0;border-left:1px solid #a0a0a0;border-bottom:1px solid #5a5a5a;border-right:1px solid #5a5a5a"></div>
<div class="t" style="left:452.69px;top:450.47px;font-size:7.0px;letter-spacing:0.6px;color:#222222;transform:scaleX(0.9193);transform-origin:0 0;-webkit-text-stroke:0.15px #222222">Decel Cut</div>
<div class="a" style="left:505.6px;top:449px;width:69px;height:10px;background:#8a8a8a;border-top:1px solid #a0a0a0;border-left:1px solid #a0a0a0;border-bottom:1px solid #5a5a5a;border-right:1px solid #5a5a5a"></div>
<div class="t" style="left:521.69px;top:450.47px;font-size:7.0px;letter-spacing:0.6px;color:#222222;transform:scaleX(0.9078);transform-origin:0 0;-webkit-text-stroke:0.15px #222222">Flood clear</div>
<div class="a" style="left:576.7px;top:449px;width:69px;height:10px;background:#8a8a8a;border-top:1px solid #a0a0a0;border-left:1px solid #a0a0a0;border-bottom:1px solid #5a5a5a;border-right:1px solid #5a5a5a"></div>
<div class="t" style="left:599.37px;top:450.47px;font-size:7.0px;letter-spacing:0.6px;color:#222222;transform:scaleX(0.8904);transform-origin:0 0;-webkit-text-stroke:0.15px #222222">Idle Off</div>
<div class="a" style="left:647.8px;top:449px;width:69px;height:10px;background:#8a8a8a;border-top:1px solid #a0a0a0;border-left:1px solid #a0a0a0;border-bottom:1px solid #5a5a5a;border-right:1px solid #5a5a5a"></div>
<div class="t" style="left:670.05px;top:450.47px;font-size:7.0px;letter-spacing:0.6px;color:#222222;transform:scaleX(0.9153);transform-origin:0 0;-webkit-text-stroke:0.15px #222222">Fan Off</div>
<div class="a" style="left:718.9px;top:449px;width:69px;height:10px;background:#8a8a8a;border-top:1px solid #a0a0a0;border-left:1px solid #a0a0a0;border-bottom:1px solid #5a5a5a;border-right:1px solid #5a5a5a"></div>
<div class="t" style="left:733.72px;top:450.47px;font-size:7.0px;letter-spacing:0.6px;color:#222222;transform:scaleX(0.9299);transform-origin:0 0;-webkit-text-stroke:0.15px #222222">Speed Burn</div>
<div class="a" style="left:790.0px;top:449px;width:69px;height:10px;background:#8a8a8a;border-top:1px solid #a0a0a0;border-left:1px solid #a0a0a0;border-bottom:1px solid #5a5a5a;border-right:1px solid #5a5a5a"></div>
<div class="t" style="left:808.61px;top:450.47px;font-size:7.0px;letter-spacing:0.6px;color:#222222;transform:scaleX(0.9158);transform-origin:0 0;-webkit-text-stroke:0.15px #222222">Lost Data</div>
<div class="a" style="left:861.1px;top:449px;width:69px;height:10px;background:#8f2525;border-top:1px solid #a0a0a0;border-left:1px solid #a0a0a0;border-bottom:1px solid #5a5a5a;border-right:1px solid #5a5a5a"></div>
<div class="t" style="left:876.98px;top:450.47px;font-size:7.0px;letter-spacing:0.6px;color:#5a1414;transform:scaleX(0.9228);transform-origin:0 0;-webkit-text-stroke:0.15px #5a1414">Not synced</div>
<div class="a" style="left:79.0px;top:460.6px;width:69px;height:10px;background:#8a8a8a;border-top:1px solid #a0a0a0;border-left:1px solid #a0a0a0;border-bottom:1px solid #5a5a5a;border-right:1px solid #5a5a5a"></div>
<div class="t" style="left:102.16px;top:462.07px;font-size:7.0px;letter-spacing:0.6px;color:#222222;transform:scaleX(0.9044);transform-origin:0 0;-webkit-text-stroke:0.15px #222222">CL idle</div>
<div class="a" style="left:150.1px;top:460.6px;width:69px;height:10px;background:#8a8a8a;border-top:1px solid #a0a0a0;border-left:1px solid #a0a0a0;border-bottom:1px solid #5a5a5a;border-right:1px solid #5a5a5a"></div>
<div class="t" style="left:165.63px;top:462.07px;font-size:7.0px;letter-spacing:0.6px;color:#222222;transform:scaleX(0.9121);transform-origin:0 0;-webkit-text-stroke:0.15px #222222">Fuel Tbl sw</div>
<div class="a" style="left:221.2px;top:460.6px;width:69px;height:10px;background:#8a8a8a;border-top:1px solid #a0a0a0;border-left:1px solid #a0a0a0;border-bottom:1px solid #5a5a5a;border-right:1px solid #5a5a5a"></div>
<div class="t" style="left:237.57px;top:462.07px;font-size:7.0px;letter-spacing:0.6px;color:#222222;transform:scaleX(0.9192);transform-origin:0 0;-webkit-text-stroke:0.15px #222222">Spk Tbl sw</div>
<div class="a" style="left:292.3px;top:460.6px;width:69px;height:10px;background:#8a8a8a;border-top:1px solid #a0a0a0;border-left:1px solid #a0a0a0;border-bottom:1px solid #5a5a5a;border-right:1px solid #5a5a5a"></div>
<div class="t" style="left:312.60px;top:462.07px;font-size:7.0px;letter-spacing:0.6px;color:#222222;transform:scaleX(0.8834);transform-origin:0 0;-webkit-text-stroke:0.15px #222222">Soft limit</div>
<div class="a" style="left:363.4px;top:460.6px;width:69px;height:10px;background:#8a8a8a;border-top:1px solid #a0a0a0;border-left:1px solid #a0a0a0;border-bottom:1px solid #5a5a5a;border-right:1px solid #5a5a5a"></div>
<div class="t" style="left:382.23px;top:462.07px;font-size:7.0px;letter-spacing:0.6px;color:#222222;transform:scaleX(0.8985);transform-origin:0 0;-webkit-text-stroke:0.15px #222222">Hard limit</div>
<div class="a" style="left:434.5px;top:460.6px;width:69px;height:10px;background:#8a8a8a;border-top:1px solid #a0a0a0;border-left:1px solid #a0a0a0;border-bottom:1px solid #5a5a5a;border-right:1px solid #5a5a5a"></div>
<div class="t" style="left:455.84px;top:462.07px;font-size:7.0px;letter-spacing:0.6px;color:#222222;transform:scaleX(0.9249);transform-origin:0 0;-webkit-text-stroke:0.15px #222222">Spk Cut</div>
<div class="a" style="left:505.6px;top:460.6px;width:69px;height:10px;background:#8a8a8a;border-top:1px solid #a0a0a0;border-left:1px solid #a0a0a0;border-bottom:1px solid #5a5a5a;border-right:1px solid #5a5a5a"></div>
<div class="t" style="left:521.90px;top:462.07px;font-size:7.0px;letter-spacing:0.6px;color:#222222;transform:scaleX(0.9197);transform-origin:0 0;-webkit-text-stroke:0.15px #222222">Over boost</div>
<div class="a" style="left:576.7px;top:460.6px;width:69px;height:10px;background:#8a8a8a;border-top:1px solid #a0a0a0;border-left:1px solid #a0a0a0;border-bottom:1px solid #5a5a5a;border-right:1px solid #5a5a5a"></div>
<div class="t" style="left:597.83px;top:462.07px;font-size:7.0px;letter-spacing:0.6px;color:#222222;transform:scaleX(0.9269);transform-origin:0 0;-webkit-text-stroke:0.15px #222222">Overrun</div>
<div class="a" style="left:647.8px;top:460.6px;width:69px;height:10px;background:#8a8a8a;border-top:1px solid #a0a0a0;border-left:1px solid #a0a0a0;border-bottom:1px solid #5a5a5a;border-right:1px solid #5a5a5a"></div>
<div class="t" style="left:662.20px;top:462.07px;font-size:7.0px;letter-spacing:0.6px;color:#222222;transform:scaleX(0.9200);transform-origin:0 0;-webkit-text-stroke:0.15px #222222">Not Logging</div>
<div class="a" style="left:718.9px;top:460.6px;width:69px;height:10px;background:#8a8a8a;border-top:1px solid #a0a0a0;border-left:1px solid #a0a0a0;border-bottom:1px solid #5a5a5a;border-right:1px solid #5a5a5a"></div>
<div class="t" style="left:735.20px;top:462.07px;font-size:7.0px;letter-spacing:0.6px;color:#222222;transform:scaleX(0.9197);transform-origin:0 0;-webkit-text-stroke:0.15px #222222">Over boost</div>
<div class="a" style="left:790.0px;top:460.6px;width:69px;height:10px;background:#8a8a8a;border-top:1px solid #a0a0a0;border-left:1px solid #a0a0a0;border-bottom:1px solid #5a5a5a;border-right:1px solid #5a5a5a"></div>
<div class="t" style="left:814.29px;top:462.07px;font-size:7.0px;letter-spacing:0.6px;color:#222222;transform:scaleX(0.9365);transform-origin:0 0;-webkit-text-stroke:0.15px #222222">Knock</div>
<div class="a" style="left:861.1px;top:460.6px;width:69px;height:10px;background:#8a8a8a;border-top:1px solid #a0a0a0;border-left:1px solid #a0a0a0;border-bottom:1px solid #5a5a5a;border-right:1px solid #5a5a5a"></div>
<div class="t" style="left:887.49px;top:462.07px;font-size:7.0px;letter-spacing:0.6px;color:#222222;transform:scaleX(0.9062);transform-origin:0 0;-webkit-text-stroke:0.15px #222222">T-log</div>
<div class="a" style="left:79.0px;top:472px;width:69px;height:10px;background:#8a8a8a;border-top:1px solid #a0a0a0;border-left:1px solid #a0a0a0;border-bottom:1px solid #5a5a5a;border-right:1px solid #5a5a5a"></div>
<div class="t" style="left:83.32px;top:473.47px;font-size:7.0px;letter-spacing:0.6px;color:#222222;transform:scaleX(0.9237);transform-origin:0 0;-webkit-text-stroke:0.15px #222222">MAPsample error!</div>
<div class="a" style="left:150.1px;top:472px;width:69px;height:10px;background:#8a8a8a;border-top:1px solid #a0a0a0;border-left:1px solid #a0a0a0;border-bottom:1px solid #5a5a5a;border-right:1px solid #5a5a5a"></div>
<div class="t" style="left:176.28px;top:473.47px;font-size:7.0px;letter-spacing:0.6px;color:#222222;transform:scaleX(0.9395);transform-origin:0 0;-webkit-text-stroke:0.15px #222222">Aux1</div>
<div class="a" style="left:221.2px;top:472px;width:69px;height:10px;background:#8a8a8a;border-top:1px solid #a0a0a0;border-left:1px solid #a0a0a0;border-bottom:1px solid #5a5a5a;border-right:1px solid #5a5a5a"></div>
<div class="t" style="left:247.38px;top:473.47px;font-size:7.0px;letter-spacing:0.6px;color:#222222;transform:scaleX(0.9395);transform-origin:0 0;-webkit-text-stroke:0.15px #222222">Aux2</div>
<div class="a" style="left:292.3px;top:472px;width:69px;height:10px;background:#8a8a8a;border-top:1px solid #a0a0a0;border-left:1px solid #a0a0a0;border-bottom:1px solid #5a5a5a;border-right:1px solid #5a5a5a"></div>
<div class="t" style="left:318.48px;top:473.47px;font-size:7.0px;letter-spacing:0.6px;color:#222222;transform:scaleX(0.9395);transform-origin:0 0;-webkit-text-stroke:0.15px #222222">Aux3</div>
<div class="a" style="left:363.4px;top:472px;width:69px;height:10px;background:#8a8a8a;border-top:1px solid #a0a0a0;border-left:1px solid #a0a0a0;border-bottom:1px solid #5a5a5a;border-right:1px solid #5a5a5a"></div>
<div class="t" style="left:389.58px;top:473.47px;font-size:7.0px;letter-spacing:0.6px;color:#222222;transform:scaleX(0.9395);transform-origin:0 0;-webkit-text-stroke:0.15px #222222">Aux4</div>
<div class="a" style="left:434.5px;top:472px;width:69px;height:10px;background:#8a8a8a;border-top:1px solid #a0a0a0;border-left:1px solid #a0a0a0;border-bottom:1px solid #5a5a5a;border-right:1px solid #5a5a5a"></div>
<div class="t" style="left:460.68px;top:473.47px;font-size:7.0px;letter-spacing:0.6px;color:#222222;transform:scaleX(0.9395);transform-origin:0 0;-webkit-text-stroke:0.15px #222222">Aux5</div>
<div class="a" style="left:505.6px;top:472px;width:69px;height:10px;background:#8a8a8a;border-top:1px solid #a0a0a0;border-left:1px solid #a0a0a0;border-bottom:1px solid #5a5a5a;border-right:1px solid #5a5a5a"></div>
<div class="t" style="left:531.78px;top:473.47px;font-size:7.0px;letter-spacing:0.6px;color:#222222;transform:scaleX(0.9395);transform-origin:0 0;-webkit-text-stroke:0.15px #222222">Aux6</div>
<div class="a" style="left:576.7px;top:472px;width:69px;height:10px;background:#8a8a8a;border-top:1px solid #a0a0a0;border-left:1px solid #a0a0a0;border-bottom:1px solid #5a5a5a;border-right:1px solid #5a5a5a"></div>
<div class="t" style="left:602.88px;top:473.47px;font-size:7.0px;letter-spacing:0.6px;color:#222222;transform:scaleX(0.9395);transform-origin:0 0;-webkit-text-stroke:0.15px #222222">Aux7</div>
<div class="a" style="left:647.8px;top:472px;width:69px;height:10px;background:#8a8a8a;border-top:1px solid #a0a0a0;border-left:1px solid #a0a0a0;border-bottom:1px solid #5a5a5a;border-right:1px solid #5a5a5a"></div>
<div class="t" style="left:673.98px;top:473.47px;font-size:7.0px;letter-spacing:0.6px;color:#222222;transform:scaleX(0.9395);transform-origin:0 0;-webkit-text-stroke:0.15px #222222">Aux8</div>
<div class="a" style="left:718.9px;top:472px;width:69px;height:10px;background:#8a8a8a;border-top:1px solid #a0a0a0;border-left:1px solid #a0a0a0;border-bottom:1px solid #5a5a5a;border-right:1px solid #5a5a5a"></div>
<div class="t" style="left:733.09px;top:473.47px;font-size:7.0px;letter-spacing:0.6px;color:#222222;transform:scaleX(0.9214);transform-origin:0 0;-webkit-text-stroke:0.15px #222222">Saving Data</div>
<div class="a" style="left:790.0px;top:472px;width:69px;height:10px;background:#8a8a8a;border-top:1px solid #a0a0a0;border-left:1px solid #a0a0a0;border-bottom:1px solid #5a5a5a;border-right:1px solid #5a5a5a"></div>
<div class="t" style="left:799.16px;top:473.47px;font-size:7.0px;letter-spacing:0.6px;color:#222222;transform:scaleX(0.9595);transform-origin:0 0;-webkit-text-stroke:0.15px #222222">EEPROM CRC</div>
<div class="a" style="left:861.1px;top:472px;width:69px;height:10px;background:#8a8a8a;border-top:1px solid #a0a0a0;border-left:1px solid #a0a0a0;border-bottom:1px solid #5a5a5a;border-right:1px solid #5a5a5a"></div>
<div class="t" style="left:882.37px;top:473.47px;font-size:7.0px;letter-spacing:0.6px;color:#222222;transform:scaleX(0.9256);transform-origin:0 0;-webkit-text-stroke:0.15px #222222">PSP Off</div>
<div class="a" style="left:79.0px;top:483.3px;width:69px;height:10px;background:#8a8a8a;border-top:1px solid #a0a0a0;border-left:1px solid #a0a0a0;border-bottom:1px solid #5a5a5a;border-right:1px solid #5a5a5a"></div>
<div class="t" style="left:93.19px;top:484.77px;font-size:7.0px;letter-spacing:0.6px;color:#222222;transform:scaleX(0.9092);transform-origin:0 0;-webkit-text-stroke:0.15px #222222">Table switch</div>
<div class="a" style="left:150.1px;top:483.3px;width:69px;height:10px;background:#8a8a8a;border-top:1px solid #a0a0a0;border-left:1px solid #a0a0a0;border-bottom:1px solid #5a5a5a;border-right:1px solid #5a5a5a"></div>
<div class="t" style="left:166.46px;top:484.77px;font-size:7.0px;letter-spacing:0.6px;color:#222222;transform:scaleX(0.9192);transform-origin:0 0;-webkit-text-stroke:0.15px #222222">Launch Off</div>
<div class="a" style="left:221.2px;top:483.3px;width:69px;height:10px;background:#8a8a8a;border-top:1px solid #a0a0a0;border-left:1px solid #a0a0a0;border-bottom:1px solid #5a5a5a;border-right:1px solid #5a5a5a"></div>
<div class="t" style="left:238.34px;top:484.77px;font-size:7.0px;letter-spacing:0.6px;color:#222222;transform:scaleX(0.9276);transform-origin:0 0;-webkit-text-stroke:0.15px #222222">Boost Low</div>
<div class="a" style="left:292.3px;top:483.3px;width:69px;height:10px;background:#8a8a8a;border-top:1px solid #a0a0a0;border-left:1px solid #a0a0a0;border-bottom:1px solid #5a5a5a;border-right:1px solid #5a5a5a"></div>
<div class="t" style="left:316.38px;top:484.77px;font-size:7.0px;letter-spacing:0.6px;color:#222222;transform:scaleX(0.9149);transform-origin:0 0;-webkit-text-stroke:0.15px #222222">Clutch</div>
<div class="a" style="left:363.4px;top:483.3px;width:69px;height:10px;background:#8a8a8a;border-top:1px solid #a0a0a0;border-left:1px solid #a0a0a0;border-bottom:1px solid #5a5a5a;border-right:1px solid #5a5a5a"></div>
<div class="t" style="left:386.00px;top:484.77px;font-size:7.0px;letter-spacing:0.6px;color:#222222;transform:scaleX(0.9113);transform-origin:0 0;-webkit-text-stroke:0.15px #222222">Neutral</div>
<div class="a" style="left:434.5px;top:483.3px;width:69px;height:10px;background:#8a8a8a;border-top:1px solid #a0a0a0;border-left:1px solid #a0a0a0;border-bottom:1px solid #5a5a5a;border-right:1px solid #5a5a5a"></div>
<div class="t" style="left:456.97px;top:484.77px;font-size:7.0px;letter-spacing:0.6px;color:#222222;transform:scaleX(0.9129);transform-origin:0 0;-webkit-text-stroke:0.15px #222222">A/C Off</div>
<div class="a" style="left:505.6px;top:483.3px;width:69px;height:10px;background:#8a8a8a;border-top:1px solid #a0a0a0;border-left:1px solid #a0a0a0;border-bottom:1px solid #5a5a5a;border-right:1px solid #5a5a5a"></div>
<div class="t" style="left:524.49px;top:484.77px;font-size:7.0px;letter-spacing:0.6px;color:#222222;transform:scaleX(0.9133);transform-origin:0 0;-webkit-text-stroke:0.15px #222222">Brake Off</div>
<div class="a" style="left:576.7px;top:483.3px;width:69px;height:10px;background:#8a8a8a;border-top:1px solid #a0a0a0;border-left:1px solid #a0a0a0;border-bottom:1px solid #5a5a5a;border-right:1px solid #5a5a5a"></div>
<div class="t" style="left:597.13px;top:484.77px;font-size:7.0px;letter-spacing:0.6px;color:#222222;transform:scaleX(0.8984);transform-origin:0 0;-webkit-text-stroke:0.15px #222222">Valet Off</div>
<div class="a" style="left:647.8px;top:483.3px;width:69px;height:10px;background:#8a8a8a;border-top:1px solid #a0a0a0;border-left:1px solid #a0a0a0;border-bottom:1px solid #5a5a5a;border-right:1px solid #5a5a5a"></div>
<div class="t" style="left:663.33px;top:484.77px;font-size:7.0px;letter-spacing:0.6px;color:#222222;transform:scaleX(0.8869);transform-origin:0 0;-webkit-text-stroke:0.15px #222222">Flatshift Off</div>
<div class="a" style="left:718.9px;top:483.3px;width:69px;height:10px;background:#8a8a8a;border-top:1px solid #a0a0a0;border-left:1px solid #a0a0a0;border-bottom:1px solid #5a5a5a;border-right:1px solid #5a5a5a"></div>
<div class="t" style="left:740.11px;top:484.77px;font-size:7.0px;letter-spacing:0.6px;color:#222222;transform:scaleX(0.9262);transform-origin:0 0;-webkit-text-stroke:0.15px #222222">TEN Off</div>
<div class="a" style="left:790.0px;top:483.3px;width:69px;height:10px;background:#8f2525;border-top:1px solid #a0a0a0;border-left:1px solid #a0a0a0;border-bottom:1px solid #5a5a5a;border-right:1px solid #5a5a5a"></div>
<div class="t" style="left:818.07px;top:484.77px;font-size:7.0px;letter-spacing:0.6px;color:#5a1414;transform:scaleX(0.9443);transform-origin:0 0;-webkit-text-stroke:0.15px #5a1414">IMS</div>
<div class="a" style="left:861.1px;top:483.3px;width:69px;height:10px;background:#8a8a8a;border-top:1px solid #a0a0a0;border-left:1px solid #a0a0a0;border-bottom:1px solid #5a5a5a;border-right:1px solid #5a5a5a"></div>
<div class="t" style="left:873.39px;top:484.77px;font-size:7.0px;letter-spacing:0.6px;color:#767676;transform:scaleX(0.9215);transform-origin:0 0;-webkit-text-stroke:0.15px #767676">Data Logging</div>
<svg class="a" style="left:75px;top:495px" width="155" height="18"><path d="M1 0 L1 10 Q1 15 6 16 L87 16 L87 0 Z" fill="#c9dcf1" stroke="#8db2e3"/><path d="M88 0 L88 11 L92 15 L122 15 L122 0 Z" fill="#f3f3f3" stroke="#a7b6c6"/><path d="M123 0 L123 11 L127 15 L151 15 L151 0 Z" fill="#f3f3f3" stroke="#a7b6c6"/></svg>
<div class="t" style="left:84.00px;top:499.23px;font-size:10.6px;font-weight:bold;color:#333;transform:scaleX(0.8186);transform-origin:0 0;">Main Dashboard</div>
<div class="t" style="left:170.00px;top:499.23px;font-size:10.6px;font-weight:bold;color:#333;transform:scaleX(0.8488);transform-origin:0 0;">map</div>
<svg class="a" style="left:206px;top:497px" width="12" height="13"><path d="M1 1 L7 1 L10 4 L10 12 L1 12 Z" fill="#e6e8f8" stroke="#444"/><path d="M3 5h5M3 7h5M3 9h4" stroke="#667" stroke-width="0.8"/><path d="M7 9 L11 12" stroke="#333" stroke-width="1.4"/></svg>
<div class="a" style="left:74px;top:514px;width:863px;height:1px;background:#8db2e3"></div>
<div class="a" style="left:75px;top:515px;width:224px;height:16px;background:#eeeeee;border-top:1px solid #9a9a9a;border-left:1px solid #9a9a9a;border-bottom:1px solid #fff"></div>
<div class="t" style="left:77.00px;top:517.83px;font-size:10.6px;color:#111;transform:scaleX(0.8231);transform-origin:0 0;">MSM Ready</div>
<div class="a" style="left:300px;top:516px;width:378px;height:13px;background:#f2f2f2;border:1px solid #888;border-bottom-color:#fafafa;border-right-color:#fafafa"></div>
<div class="a" style="left:302px;top:518px;width:374px;height:8px;background:#0a7cff"></div>
<div class="a" style="left:679px;top:516px;width:224px;height:14px;background:#eeeeee;border-top:1px solid #9a9a9a;border-left:1px solid #9a9a9a"></div>
<div class="t" style="left:681.00px;top:517.83px;font-size:10.6px;color:#111;transform:scaleX(0.8650);transform-origin:0 0;">CurrentTune.msq</div>
<div class="a" style="left:904px;top:516px;width:17px;height:14px;background:#eeeeee;border-top:1px solid #9a9a9a;border-left:1px solid #9a9a9a"></div>
<svg class="a" style="left:906px;top:517px" width="13" height="12"><rect x="1.5" y="3" width="10" height="6" fill="#222"/><rect x="7" y="4" width="3" height="4" fill="#3a3"/><circle cx="6.5" cy="6" r="5" fill="none" stroke="#e02020" stroke-width="1.4"/><line x1="3" y1="2.5" x2="10" y2="9.5" stroke="#e02020" stroke-width="1.4"/></svg>
<div class="a" style="left:924px;top:522px;width:10px;height:8px;background:radial-gradient(circle,#aaa 0.6px,transparent 0.8px) 0 0/3px 3px"></div>
<div class="a" style="left:272px;top:91px;width:466px;height:391px;border-radius:6px 6px 4px 4px;box-shadow:0 2px 10px 2px rgba(0,0,0,.55)"></div>
<div class="a" style="left:272px;top:91px;width:466px;height:391px;border-radius:6px 6px 4px 4px;background:linear-gradient(180deg,#f2f4f7 0%,#e4e8ec 6%,#dadfe4 100%);border:1px solid #4c545e"></div>
<div class="a" style="left:273px;top:92px;width:464px;height:1px;background:rgba(255,255,255,.9)"></div>
<div class="a" style="left:380px;top:97px;width:300px;height:11px;background:linear-gradient(90deg,rgba(255,255,255,0),rgba(180,186,195,.4) 25%,rgba(240,242,245,.3) 45%,rgba(180,186,195,.4) 70%,rgba(255,255,255,0))"></div>
<svg class="a" style="left:278px;top:95px" width="14" height="14"><rect x="0.5" y="0.5" width="8" height="9" rx="1.5" fill="#e8c46a"/><rect x="2.5" y="2" width="7" height="9.5" rx="1" fill="#5a9ae0"/><rect x="3" y="2.5" width="3" height="8" fill="#a8d0f5" opacity=".7"/><circle cx="6" cy="5" r="1.3" fill="#1a5ab0"/><circle cx="8" cy="11" r="2" fill="#9a9a9a"/><circle cx="11" cy="10.5" r="2" fill="#a8a8a8"/></svg>
<div class="t" style="left:293.00px;top:96.26px;font-size:10.8px;color:#111;transform:scaleX(0.8329);transform-origin:0 0;">Cranking Pulsewidth%</div>
<div class="a" style="left:699px;top:91px;width:35px;height:14px;background:linear-gradient(180deg,#eab0a0 0%,#d87058 42%,#c4452c 52%,#cf5d40 100%);border:1px solid #7c2c1e;border-top:none;border-radius:0 0 4px 4px"></div>
<svg class="a" style="left:710px;top:93px" width="13" height="10"><path d="M2 1.5 L11 8.5 M11 1.5 L2 8.5" stroke="#6a2a20" stroke-width="3.6"/><path d="M2 1.5 L11 8.5 M11 1.5 L2 8.5" stroke="#fff" stroke-width="2"/></svg>
<div class="a" style="left:277px;top:112px;width:457px;height:365px;background:#eeeeee;border:1px solid #8a929b"></div>
<div class="a" style="left:278px;top:113px;width:455px;height:17px;background:linear-gradient(180deg,#ffffff,#f3f3f3 55%,#e6e6e6)"></div>
<div class="t" style="left:282.00px;top:115.49px;font-size:11px;color:#1a1a1a;transform:scaleX(0.7898);transform-origin:0 0;"><u>F</u>ile</div>
<div class="a" style="left:278px;top:130px;width:455px;height:313px;background:#000"></div>
<div class="a" style="left:279px;top:132px;width:322px;height:310px;border:1px dotted #9a9a9a"></div>
<svg class="a" style="left:278px;top:130px" width="324" height="313" viewBox="278 130 324 313" font-family="Liberation Sans, sans-serif">
<line x1="347.05" y1="147.6" x2="347.05" y2="416.6" stroke="#b8b8b8" stroke-width="1"/>
<line x1="381.70" y1="147.6" x2="381.70" y2="416.6" stroke="#b8b8b8" stroke-width="1"/>
<line x1="416.35" y1="147.6" x2="416.35" y2="416.6" stroke="#b8b8b8" stroke-width="1"/>
<line x1="451.00" y1="147.6" x2="451.00" y2="416.6" stroke="#b8b8b8" stroke-width="1"/>
<line x1="485.65" y1="147.6" x2="485.65" y2="416.6" stroke="#b8b8b8" stroke-width="1"/>
<line x1="520.30" y1="147.6" x2="520.30" y2="416.6" stroke="#b8b8b8" stroke-width="1"/>
<line x1="554.95" y1="147.6" x2="554.95" y2="416.6" stroke="#b8b8b8" stroke-width="1"/>
<line x1="589.60" y1="147.6" x2="589.60" y2="416.6" stroke="#b8b8b8" stroke-width="1"/>
<line x1="312.4" y1="362.80" x2="589.6" y2="362.80" stroke="#c8c8c8" stroke-width="1"/>
<line x1="312.4" y1="309.00" x2="589.6" y2="309.00" stroke="#c8c8c8" stroke-width="1"/>
<line x1="312.4" y1="255.20" x2="589.6" y2="255.20" stroke="#c8c8c8" stroke-width="1"/>
<line x1="312.4" y1="201.40" x2="589.6" y2="201.40" stroke="#c8c8c8" stroke-width="1"/>
<line x1="312.4" y1="147.60" x2="589.6" y2="147.60" stroke="#c8c8c8" stroke-width="1"/>
<line x1="312.4" y1="147.6" x2="312.4" y2="416.6" stroke="#bbb" stroke-width="1.3"/>
<line x1="312.4" y1="416.6" x2="589.6" y2="416.6" stroke="#ccc" stroke-width="1.3"/>
<text x="311.3" y="416.80" font-size="8.5" fill="#e6e6e6" text-anchor="end" textLength="12.2" lengthAdjust="spacingAndGlyphs">0.0</text>
<text x="311.3" y="365.60" font-size="8.5" fill="#e6e6e6" text-anchor="end" textLength="20.1" lengthAdjust="spacingAndGlyphs">100.0</text>
<text x="311.3" y="311.80" font-size="8.5" fill="#e6e6e6" text-anchor="end" textLength="20.1" lengthAdjust="spacingAndGlyphs">200.0</text>
<text x="311.3" y="258.00" font-size="8.5" fill="#e6e6e6" text-anchor="end" textLength="20.1" lengthAdjust="spacingAndGlyphs">300.0</text>
<text x="311.3" y="204.20" font-size="8.5" fill="#e6e6e6" text-anchor="end" textLength="20.1" lengthAdjust="spacingAndGlyphs">400.0</text>
<text x="311.3" y="153.90" font-size="8.5" fill="#e6e6e6" text-anchor="end" textLength="20.1" lengthAdjust="spacingAndGlyphs">500.0</text>
<text x="314.90" y="427.8" font-size="8.5" fill="#e6e6e6" text-anchor="middle">-40.0</text>
<text x="347.05" y="427.8" font-size="8.5" fill="#e6e6e6" text-anchor="middle">8.8</text>
<text x="381.70" y="427.8" font-size="8.5" fill="#e6e6e6" text-anchor="middle">57.5</text>
<text x="416.35" y="427.8" font-size="8.5" fill="#e6e6e6" text-anchor="middle">106.3</text>
<text x="451.00" y="427.8" font-size="8.5" fill="#e6e6e6" text-anchor="middle">155.0</text>
<text x="485.65" y="427.8" font-size="8.5" fill="#e6e6e6" text-anchor="middle">203.8</text>
<text x="520.30" y="427.8" font-size="8.5" fill="#e6e6e6" text-anchor="middle">252.5</text>
<text x="554.95" y="427.8" font-size="8.5" fill="#e6e6e6" text-anchor="middle">301.3</text>
<text x="590.10" y="427.8" font-size="8.5" fill="#e6e6e6" text-anchor="end">350.0</text>
<text x="384" y="144.3" font-size="9.4" font-weight="bold" fill="#fff" textLength="112" lengthAdjust="spacing" letter-spacing="0.6">Cranking Pulsewidth%</text>
<text x="425" y="436.8" font-size="9" font-weight="bold" fill="#fff" textLength="52" lengthAdjust="spacingAndGlyphs">Coolant  (°F)</text>
<text x="287.3" y="219.0" font-size="8.6" font-weight="bold" fill="#fff" text-anchor="middle">C</text>
<text x="287.3" y="228.0" font-size="8.6" font-weight="bold" fill="#fff" text-anchor="middle">r</text>
<text x="287.3" y="237.0" font-size="8.6" font-weight="bold" fill="#fff" text-anchor="middle">a</text>
<text x="287.3" y="246.0" font-size="8.6" font-weight="bold" fill="#fff" text-anchor="middle">n</text>
<text x="287.3" y="255.0" font-size="8.6" font-weight="bold" fill="#fff" text-anchor="middle">k</text>
<text x="287.3" y="264.0" font-size="8.6" font-weight="bold" fill="#fff" text-anchor="middle">i</text>
<text x="287.3" y="273.0" font-size="8.6" font-weight="bold" fill="#fff" text-anchor="middle">n</text>
<text x="287.3" y="282.0" font-size="8.6" font-weight="bold" fill="#fff" text-anchor="middle">g</text>
<text x="287.3" y="300.0" font-size="8.6" font-weight="bold" fill="#fff" text-anchor="middle">P</text>
<text x="287.3" y="309.0" font-size="8.6" font-weight="bold" fill="#fff" text-anchor="middle">W</text>
<text x="287.3" y="318.0" font-size="8.6" font-weight="bold" fill="#fff" text-anchor="middle">%</text>
<text x="287.3" y="336.0" font-size="8.6" font-weight="bold" fill="#fff" text-anchor="middle">%</text>
<polyline points="349.98,255.20 362.78,271.34 375.57,298.24 388.36,330.52 401.16,346.66 413.95,352.04 426.74,357.42 439.54,362.80 458.73,367.10 477.92,370.33" stroke="#f5f500" stroke-width="2.3" fill="none" stroke-linejoin="round"/>
<circle cx="349.98" cy="255.20" r="3.3" fill="#0000f0"/>
<circle cx="362.78" cy="271.34" r="3.3" fill="#0000f0"/>
<circle cx="375.57" cy="298.24" r="3.3" fill="#0000f0"/>
<circle cx="388.36" cy="330.52" r="3.3" fill="#0000f0"/>
<circle cx="401.16" cy="346.66" r="3.3" fill="#0000f0"/>
<circle cx="413.95" cy="352.04" r="3.3" fill="#0000f0"/>
<circle cx="426.74" cy="357.42" r="3.3" fill="#0000f0"/>
<circle cx="439.54" cy="362.80" r="3.3" fill="#0000f0"/>
<circle cx="458.73" cy="367.10" r="3.3" fill="#0000f0"/>
<circle cx="477.92" cy="370.33" r="3.3" fill="#0000f0"/>
</svg>
<div class="a" style="left:282px;top:133px;width:11px;height:11px;background:linear-gradient(180deg,#fdfeff,#cfe1f3);border:1px solid #9ab4cc"></div>
<div class="a" style="left:284px;top:140px;width:7px;height:2px;background:repeating-linear-gradient(90deg,#7a5a20 0 1.5px,#5080b0 1.5px 2.5px)"></div>
<svg class="a" style="left:293px;top:131px" width="12" height="13"><ellipse cx="6" cy="7.5" rx="5.5" ry="4.5" fill="#cfe8f8" stroke="#8ab" stroke-width=".6"/><path d="M5 9 L10 2" stroke="#e08a20" stroke-width="1.6"/><circle cx="10.5" cy="1.8" r="1" fill="#d33"/></svg>
<div class="a" style="left:587px;top:133px;width:11px;height:11px;background:linear-gradient(180deg,#fdfeff,#cfe1f3);border:1px solid #9ab4cc"></div>
<div class="a" style="left:589px;top:140px;width:7px;height:2px;background:repeating-linear-gradient(90deg,#7a5a20 0 1.5px,#5080b0 1.5px 2.5px)"></div>
<svg class="a" style="left:602px;top:130px" width="131" height="121" viewBox="602 130 131 121" font-family="Liberation Sans, sans-serif">
<circle cx="666.3" cy="190" r="60" fill="#4a4a5e"/>
<circle cx="666.3" cy="190" r="59" fill="#8a8aa0"/>
<circle cx="666.3" cy="190" r="57" fill="#c4c4d0"/>
<circle cx="666.3" cy="190" r="56" fill="#f2f2f4"/>
<path d="M719.48 180.62 A54 54 0 0 1 717.66 206.69" stroke="#ffff00" stroke-width="4.5" fill="none"/>
<path d="M717.66 206.69 A54 54 0 0 1 703.81 228.84" stroke="#ff0000" stroke-width="4.5" fill="none"/>
<line x1="630.59" y1="225.71" x2="627.41" y2="228.89" stroke="#23235a" stroke-width="1.7"/>
<line x1="616.57" y1="181.23" x2="612.14" y2="180.45" stroke="#23235a" stroke-width="1.7"/>
<line x1="644.96" y1="144.23" x2="643.06" y2="140.15" stroke="#23235a" stroke-width="1.7"/>
<line x1="691.55" y1="146.27" x2="693.80" y2="142.37" stroke="#23235a" stroke-width="1.7"/>
<line x1="716.61" y1="185.60" x2="721.09" y2="185.21" stroke="#23235a" stroke-width="1.7"/>
<text x="635.5" y="226.3" font-size="9.6" fill="#333366" text-anchor="middle">-40</text>
<text x="621" y="187.3" font-size="9.6" fill="#333366" text-anchor="middle">60</text>
<text x="648.3" y="155.3" font-size="9.6" fill="#333366" text-anchor="middle">160</text>
<text x="687.3" y="156.1" font-size="9.6" fill="#333366" text-anchor="middle">260</text>
<text x="709.8" y="190.8" font-size="9.6" fill="#333366" text-anchor="middle">360</text>
<text x="667.5" y="170.3" font-size="9.6" fill="#333366" text-anchor="middle">0(°F)</text>
<text x="666.3" y="182.2" font-size="10.6" fill="#333366" text-anchor="middle" textLength="59" lengthAdjust="spacingAndGlyphs">Coolant Temp</text>
<path d="M617.8 211.2 L671.5 184 Q675 183 676 185.5 L674.5 188.5 Z" fill="#000080"/>
</svg>
<div class="a" style="left:602px;top:250px;width:131px;height:193px;background:#000"></div>
<div class="a" style="left:603px;top:251px;width:128px;height:190px;border:1px solid #2e3a48"></div>
<div class="a" style="left:606px;top:255px;width:121px;height:183px;background:#eeeeee;border:1px solid #fafafa"></div>
<div class="a" style="left:611px;top:261px;width:53px;height:177px;border:1px solid #cdcdcd;border-bottom:none;border-right-color:#fff"></div>
<div class="a" style="left:669px;top:261px;width:54px;height:177px;border:1px solid #cdcdcd;border-bottom:none;border-right-color:#fff"></div>
<div class="a" style="left:614px;top:256px;width:48px;height:10px;background:#eeeeee"></div>
<div class="t" style="left:615.80px;top:258.01px;font-size:9.2px;font-weight:bold;color:#333;transform:scaleX(0.9510);transform-origin:0 0;">Coolant (...</div>
<div class="a" style="left:672px;top:256px;width:45px;height:10px;background:#eeeeee"></div>
<div class="t" style="left:674.00px;top:258.01px;font-size:9.2px;font-weight:bold;color:#333;transform:scaleX(0.9184);transform-origin:0 0;">Crankin...</div>
<div class="a" style="left:616.5px;top:269.4px;width:45px;height:15.5px;background:#fff;border-top:2px solid #888;border-left:2px solid #888;border-bottom:1px solid #e4e4e4;border-right:1px solid #e4e4e4"></div>
<div class="t" style="left:619.50px;top:273.93px;font-size:9.3px;color:#333;transform:scaleX(1.0000);transform-origin:0 0;">14.0</div>
<div class="a" style="left:674px;top:269.4px;width:45px;height:15.5px;background:#fff;border-top:2px solid #888;border-left:2px solid #888;border-bottom:1px solid #e4e4e4;border-right:1px solid #e4e4e4"></div>
<div class="t" style="left:677.00px;top:273.93px;font-size:9.3px;color:#333;transform:scaleX(1.0000);transform-origin:0 0;">300</div>
<div class="a" style="left:616.5px;top:285.9px;width:45px;height:15.5px;background:#fff;border-top:2px solid #888;border-left:2px solid #888;border-bottom:1px solid #e4e4e4;border-right:1px solid #e4e4e4"></div>
<div class="t" style="left:619.50px;top:290.43px;font-size:9.3px;color:#333;transform:scaleX(1.0000);transform-origin:0 0;">32.0</div>
<div class="a" style="left:674px;top:285.9px;width:45px;height:15.5px;background:#fff;border-top:2px solid #888;border-left:2px solid #888;border-bottom:1px solid #e4e4e4;border-right:1px solid #e4e4e4"></div>
<div class="t" style="left:677.00px;top:290.43px;font-size:9.3px;color:#333;transform:scaleX(1.0000);transform-origin:0 0;">270</div>
<div class="a" style="left:616.5px;top:302.4px;width:45px;height:15.5px;background:#fff;border-top:2px solid #888;border-left:2px solid #888;border-bottom:1px solid #e4e4e4;border-right:1px solid #e4e4e4"></div>
<div class="t" style="left:619.50px;top:306.93px;font-size:9.3px;color:#333;transform:scaleX(1.0000);transform-origin:0 0;">50.0</div>
<div class="a" style="left:674px;top:302.4px;width:45px;height:15.5px;background:#fff;border-top:2px solid #888;border-left:2px solid #888;border-bottom:1px solid #e4e4e4;border-right:1px solid #e4e4e4"></div>
<div class="t" style="left:677.00px;top:306.93px;font-size:9.3px;color:#333;transform:scaleX(1.0000);transform-origin:0 0;">220</div>
<div class="a" style="left:616.5px;top:318.9px;width:45px;height:15.5px;background:#fff;border-top:2px solid #888;border-left:2px solid #888;border-bottom:1px solid #e4e4e4;border-right:1px solid #e4e4e4"></div>
<div class="t" style="left:619.50px;top:323.43px;font-size:9.3px;color:#333;transform:scaleX(1.0000);transform-origin:0 0;">68.0</div>
<div class="a" style="left:674px;top:318.9px;width:45px;height:15.5px;background:#fff;border-top:2px solid #888;border-left:2px solid #888;border-bottom:1px solid #e4e4e4;border-right:1px solid #e4e4e4"></div>
<div class="t" style="left:677.00px;top:323.43px;font-size:9.3px;color:#333;transform:scaleX(1.0000);transform-origin:0 0;">160</div>
<div class="a" style="left:616.5px;top:335.4px;width:45px;height:15.5px;background:#fff;border-top:2px solid #888;border-left:2px solid #888;border-bottom:1px solid #e4e4e4;border-right:1px solid #e4e4e4"></div>
<div class="t" style="left:619.50px;top:339.93px;font-size:9.3px;color:#333;transform:scaleX(1.0000);transform-origin:0 0;">86.0</div>
<div class="a" style="left:674px;top:335.4px;width:45px;height:15.5px;background:#fff;border-top:2px solid #888;border-left:2px solid #888;border-bottom:1px solid #e4e4e4;border-right:1px solid #e4e4e4"></div>
<div class="t" style="left:677.00px;top:339.93px;font-size:9.3px;color:#333;transform:scaleX(1.0000);transform-origin:0 0;">130</div>
<div class="a" style="left:616.5px;top:351.9px;width:45px;height:15.5px;background:#fff;border-top:2px solid #888;border-left:2px solid #888;border-bottom:1px solid #e4e4e4;border-right:1px solid #e4e4e4"></div>
<div class="t" style="left:619.50px;top:356.43px;font-size:9.3px;color:#333;transform:scaleX(1.0000);transform-origin:0 0;">104.0</div>
<div class="a" style="left:674px;top:351.9px;width:45px;height:15.5px;background:#fff;border-top:2px solid #888;border-left:2px solid #888;border-bottom:1px solid #e4e4e4;border-right:1px solid #e4e4e4"></div>
<div class="t" style="left:677.00px;top:356.43px;font-size:9.3px;color:#333;transform:scaleX(1.0000);transform-origin:0 0;">120</div>
<div class="a" style="left:616.5px;top:368.4px;width:45px;height:15.5px;background:#fff;border-top:2px solid #888;border-left:2px solid #888;border-bottom:1px solid #e4e4e4;border-right:1px solid #e4e4e4"></div>
<div class="t" style="left:619.50px;top:372.93px;font-size:9.3px;color:#333;transform:scaleX(1.0000);transform-origin:0 0;">122.0</div>
<div class="a" style="left:674px;top:368.4px;width:45px;height:15.5px;background:#fff;border-top:2px solid #888;border-left:2px solid #888;border-bottom:1px solid #e4e4e4;border-right:1px solid #e4e4e4"></div>
<div class="t" style="left:677.00px;top:372.93px;font-size:9.3px;color:#333;transform:scaleX(1.0000);transform-origin:0 0;">110</div>
<div class="a" style="left:616.5px;top:384.9px;width:45px;height:15.5px;background:#fff;border-top:2px solid #888;border-left:2px solid #888;border-bottom:1px solid #e4e4e4;border-right:1px solid #e4e4e4"></div>
<div class="t" style="left:619.50px;top:389.43px;font-size:9.3px;color:#333;transform:scaleX(1.0000);transform-origin:0 0;">140.0</div>
<div class="a" style="left:674px;top:384.9px;width:45px;height:15.5px;background:#fff;border-top:2px solid #888;border-left:2px solid #888;border-bottom:1px solid #e4e4e4;border-right:1px solid #e4e4e4"></div>
<div class="t" style="left:677.00px;top:389.43px;font-size:9.3px;color:#333;transform:scaleX(1.0000);transform-origin:0 0;">100</div>
<div class="a" style="left:616.5px;top:401.4px;width:45px;height:15.5px;background:#fff;border-top:2px solid #888;border-left:2px solid #888;border-bottom:1px solid #e4e4e4;border-right:1px solid #e4e4e4"></div>
<div class="t" style="left:619.50px;top:405.93px;font-size:9.3px;color:#333;transform:scaleX(1.0000);transform-origin:0 0;">167.0</div>
<div class="a" style="left:674px;top:401.4px;width:45px;height:15.5px;background:#fff;border-top:2px solid #888;border-left:2px solid #888;border-bottom:1px solid #e4e4e4;border-right:1px solid #e4e4e4"></div>
<div class="t" style="left:677.00px;top:405.93px;font-size:9.3px;color:#333;transform:scaleX(1.0000);transform-origin:0 0;">92</div>
<div class="a" style="left:616.5px;top:417.9px;width:45px;height:15.5px;background:#fff;border-top:2px solid #888;border-left:2px solid #888;border-bottom:1px solid #e4e4e4;border-right:1px solid #e4e4e4"></div>
<div class="t" style="left:619.50px;top:422.43px;font-size:9.3px;color:#333;transform:scaleX(1.0000);transform-origin:0 0;">194.0</div>
<div class="a" style="left:674px;top:417.9px;width:45px;height:15.5px;background:#fff;border-top:2px solid #888;border-left:2px solid #888;border-bottom:1px solid #e4e4e4;border-right:1px solid #e4e4e4"></div>
<div class="t" style="left:677.00px;top:422.43px;font-size:9.3px;color:#333;transform:scaleX(1.0000);transform-origin:0 0;">86</div>
<div class="a" style="left:527px;top:448px;width:49px;height:25px;background:#eeeeee;border:1px solid #c6c6c6;border-radius:2px"></div>
<div class="a" style="left:578px;top:448px;width:49px;height:25px;background:#eeeeee;border:1px solid #c6c6c6;border-radius:2px"></div>
<div class="a" style="left:629px;top:448px;width:49px;height:25px;background:linear-gradient(180deg,#fafcfe 0%,#e9f1f9 45%,#d6e5f3 55%,#c7dbee 100%);border:1px solid #8aa3bd;border-radius:2px"></div>
<div class="t" style="left:644.00px;top:456.84px;font-size:10px;font-weight:bold;color:#222;transform:scaleX(0.8572);transform-origin:0 0;"><u>B</u>urn</div>
<div class="a" style="left:680px;top:448px;width:49px;height:25px;background:linear-gradient(180deg,#fafcfe 0%,#e9f1f9 45%,#d6e5f3 55%,#c7dbee 100%);border:1px solid #8aa3bd;border-radius:2px"></div>
<div class="t" style="left:693.00px;top:456.84px;font-size:10px;font-weight:bold;color:#222;transform:scaleX(0.8556);transform-origin:0 0;"><u>C</u>lose</div>
<svg class="a" style="left:527px;top:448px" width="100" height="25"><g fill="#c9c9c9" stroke="#bebebe" stroke-width=".5"><path d="M17 4 L25 4 L25 8 L21 8 L21 14 L17 14 Z"/><path d="M83 4 L75 4 L75 8 L79 8 L79 14 L83 14 Z"/></g><g fill="none" stroke="#c6c6c6" stroke-width="4.2"><path d="M21 6 Q32 6 32 20.5"/><path d="M79 6 Q68 6 68 20.5"/></g></svg>
</body></html>
